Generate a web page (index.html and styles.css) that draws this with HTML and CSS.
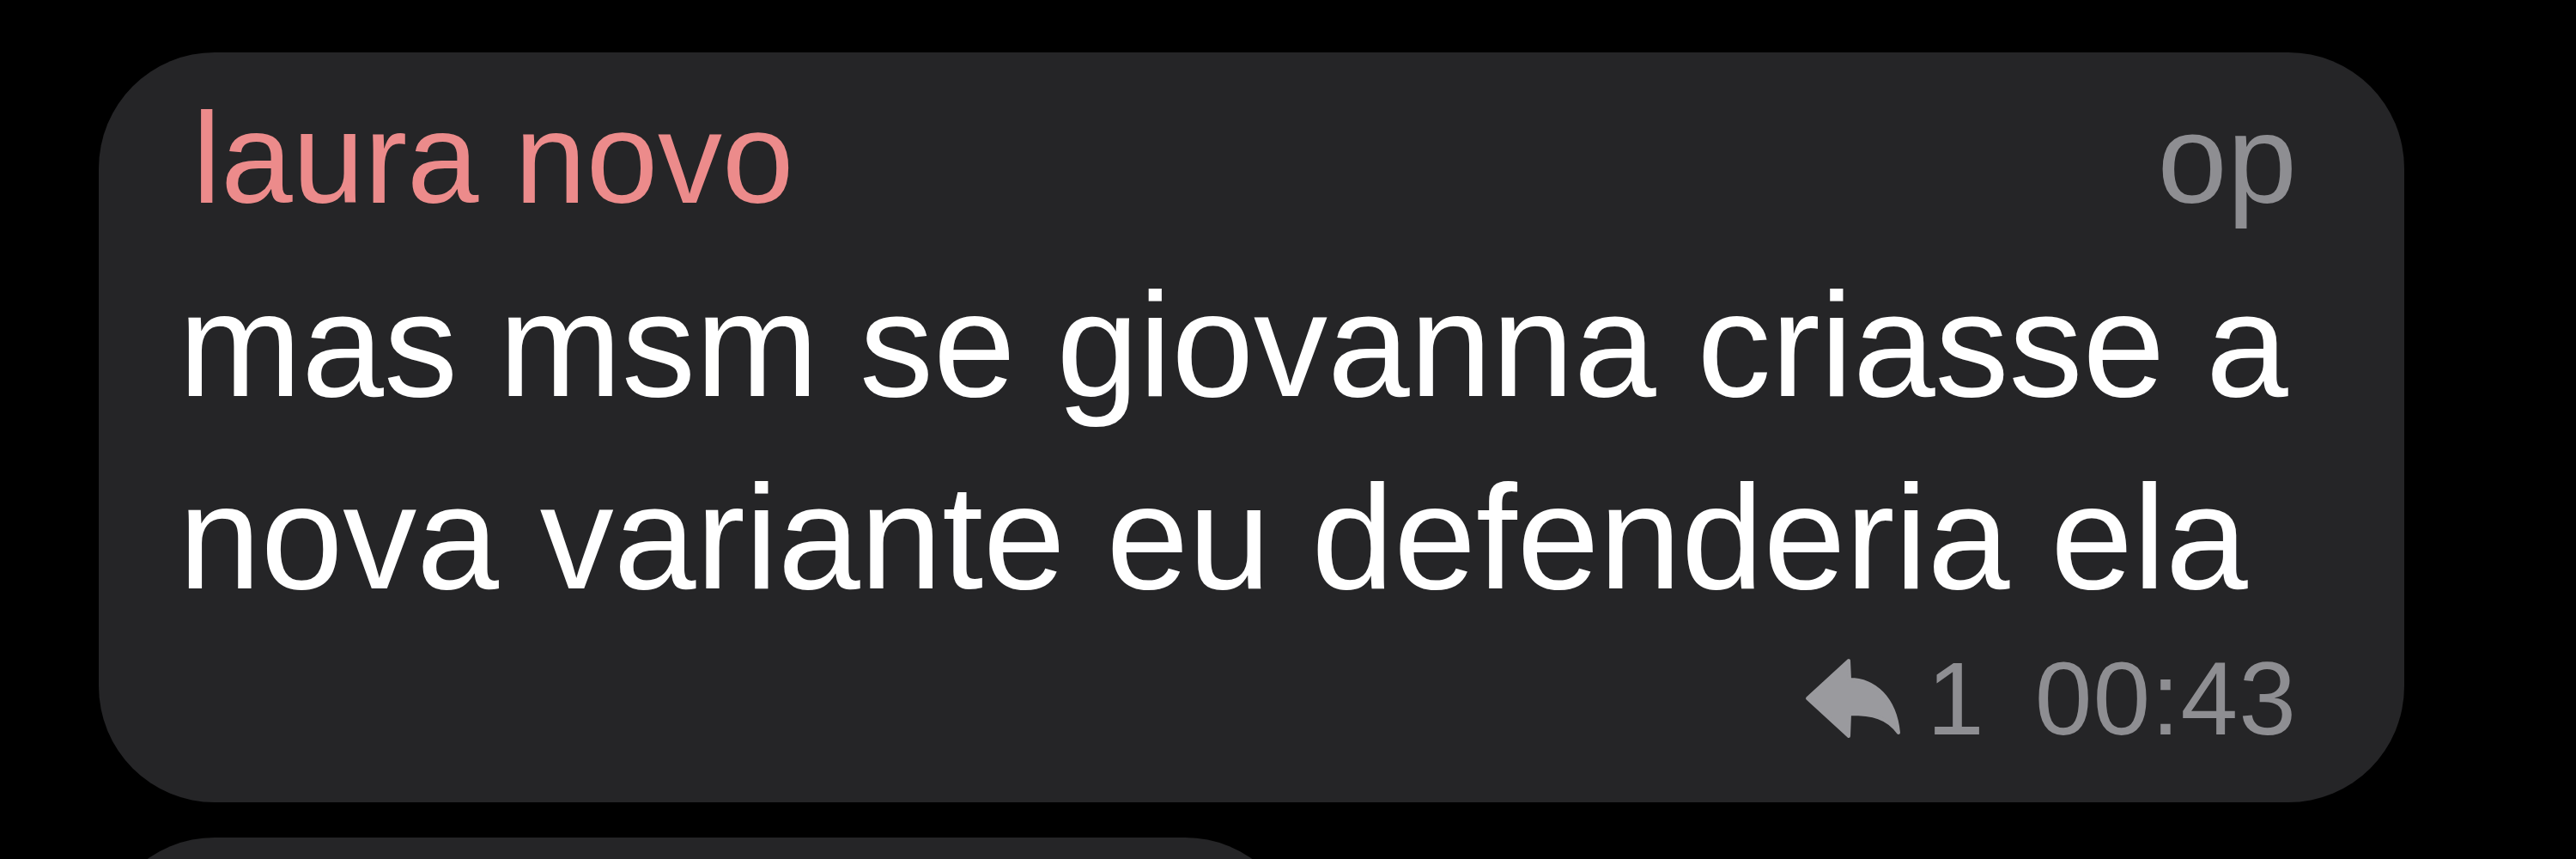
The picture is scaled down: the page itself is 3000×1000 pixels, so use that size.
FILE: index.html
```html
<!DOCTYPE html>
<html lang="pt">
<head>
    <meta charset="UTF-8">
    <title>Chat</title>
    <link rel="stylesheet" href="styles.css">
</head>
<body>
    <div class="chat">
        <div class="bubble">
            <div class="bubble-head">
                <span class="author">laura novo</span>
                <span class="badge">op</span>
            </div>
            <div class="bubble-text">mas msm se giovanna criasse a nova variante eu defenderia ela</div>
            <div class="bubble-foot">
                <svg class="reply-icon" viewBox="0 0 115 100" width="115" height="100">
                    <path d="M4 50 L52 6 L53 28 C82 28 106 50 110 90 C97 72 80 68 53 68 L52 94 Z"/>
                </svg>
                <span class="reply-count">1</span>
                <span class="time">00:43</span>
            </div>
        </div>
        <div class="bubble bubble-next"></div>
    </div>
</body>
</html>
```

FILE: styles.css
```css
html, body { margin: 0; background: #000; }
body { font-family: 'Liberation Sans', Arial, sans-serif; overflow: hidden; height: 1000px; }
.chat {
    padding: 61px 0 0 115px;
    display: flex;
    flex-direction: column;
    gap: 41px;
}
.bubble {
    width: 2685px;
    box-sizing: border-box;
    background: #252527;
    border-radius: 135px;
    padding: 38px 125px 51px 93px;
}
.bubble-head {
    display: flex;
    justify-content: space-between;
    align-items: baseline;
    font-size: 150px;
    line-height: 170px;
}
.author { color: #ec8b8b; margin-left: 16px; }
.badge { color: #8e8e92; font-size: 146px; }
.bubble-text {
    margin-top: 18px;
    color: #fff;
    font-size: 172px;
    line-height: 224px;
}
.bubble-foot {
    margin-top: 6px;
    display: flex;
    justify-content: flex-end;
    align-items: center;
    font-size: 120px;
    line-height: 140px;
    color: #8e8e92;
    letter-spacing: 1px;
}
.reply-icon { fill: #9a9a9e; stroke: #9a9a9e; stroke-width: 4; stroke-linejoin: round; margin-right: 28px; }
.reply-count { margin-right: 58px; }
.bubble-next {
    width: 1400px;
    height: 300px;
    padding: 0;
}
```
